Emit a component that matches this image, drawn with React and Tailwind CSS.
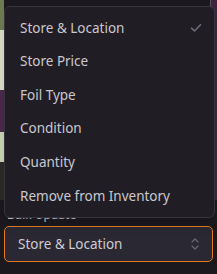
import React from "react";

function Check() {
  return (
    <svg width="12" height="10" viewBox="0 0 12 10" fill="none">
      <path d="M1.5 5.2 L4.5 8 L10.5 1.8" stroke="#6f6b75" strokeWidth="1.6" strokeLinecap="round" strokeLinejoin="round" />
    </svg>
  );
}

function Chevrons() {
  return (
    <svg width="10" height="14" viewBox="0 0 10 14" fill="none">
      <path d="M2 5 L5 2 L8 5" stroke="#6b6772" strokeWidth="1.2" strokeLinecap="round" strokeLinejoin="round" />
      <path d="M2 9 L5 12 L8 9" stroke="#6b6772" strokeWidth="1.2" strokeLinecap="round" strokeLinejoin="round" />
    </svg>
  );
}

const items = [
  "Store & Location",
  "Store Price",
  "Foil Type",
  "Condition",
  "Quantity",
  "Remove from Inventory",
];

export default function App() {
  return (
    <div
      className="relative w-[217px] h-[274px] overflow-hidden bg-[#1b191e]"
      style={{ fontFamily: '"Noto Sans", "Open Sans", sans-serif' }}
    >
      {/* background content */}
      <div className="absolute left-0 top-0 w-[4px] h-[200px] flex flex-col">
        <div className="h-[30px] bg-[#6e7a52]" />
        <div className="h-[60px] bg-[#d8dcc8]" />
        <div className="h-[42px] bg-[#4a2a4c]" />
        <div className="h-[30px] bg-[#c9d2b6]" />
        <div className="h-[38px] bg-[#2a2a26]" />
      </div>
      <div className="absolute right-0 top-0 w-[7px] h-[200px] bg-[#3e2440] border-l border-[#55505a]" />

      <div className="flex flex-col px-[4px] pt-[207px]">
        <div className="pl-[3px] h-[19px] text-[12px] leading-[16px] text-[#c9c5cc]">Bulk Update</div>
        <div className="h-[36px] rounded-[5px] border border-[#e07a1f] bg-[#2a2832] flex items-center justify-between pl-[13px] pr-[12px]">
          <span className="text-[13.5px] text-[#cfcbd3]">Store & Location</span>
          <Chevrons />
        </div>
      </div>

      {/* dropdown menu */}
      <div className="absolute left-[4px] top-[6px] w-[211px] rounded-[6px] border border-[#37343c] bg-[#201e24] py-[4px] shadow-lg">
        {items.map((it, i) => (
          <div key={it} className="h-[33.6px] flex items-center justify-between pl-[15px] pr-[12px]">
            <span className="text-[13.5px] text-[#cbc7ce]">{it}</span>
            {i === 0 && <Check />}
          </div>
        ))}
      </div>
    </div>
  );
}
